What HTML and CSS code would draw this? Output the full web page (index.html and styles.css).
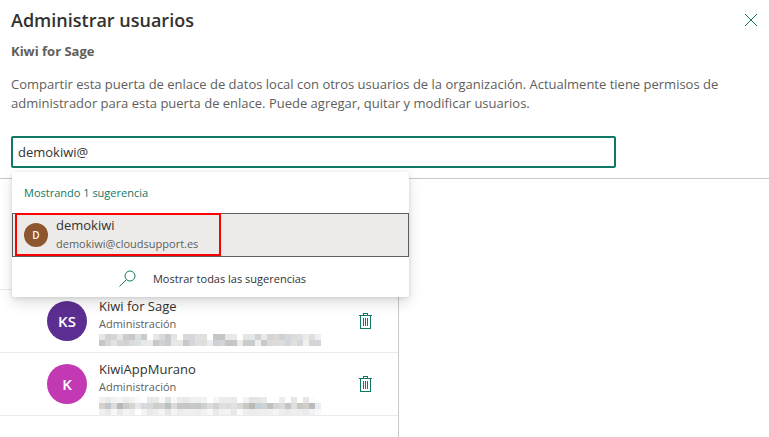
FILE: index.html
```html
<!DOCTYPE html>
<html lang="es">

<head>
    <meta charset="UTF-8">
    <meta name="viewport" content="width=device-width, initial-scale=1.0">
    <title>Administrar usuarios</title>

    <link rel="stylesheet" href="styles.css">
</head>

<body>

    <header class="panel-header">
        <div class="title-row">
            <h1>Administrar usuarios</h1>
            <button type="button" class="icon-btn" aria-label="Cerrar">
                <svg width="12" height="12" viewBox="0 0 12 12"><path d="M0 0L12 12M12 0L0 12" /></svg>
            </button>
        </div>
        <h2>Kiwi for Sage</h2>
        <p class="description">Compartir esta puerta de enlace de datos local con otros usuarios de la organización. Actualmente tiene permisos de administrador para esta puerta de enlace. Puede agregar, quitar y modificar usuarios.</p>

        <div class="picker">
            <input type="text" class="picker-input" id="people" aria-label="Buscar usuarios" value="demokiwi@">

            <div class="suggestions">
                <p class="suggestions-title">Mostrando 1 sugerencia</p>
                <button type="button" class="suggestion">
                    <span class="avatar avatar-small">D</span>
                    <span class="suggestion-text">
                        <span class="name">demokiwi</span>
                        <span class="mail">demokiwi@cloudsupport.es</span>
                    </span>
                    <span class="highlight"></span>
                </button>
                <button type="button" class="show-all">
                    <svg width="17" height="17" viewBox="0 0 17 17"><circle cx="11" cy="6" r="5" /><path d="M7.4 9.6L.5 16.5" /></svg>
                    <span>Mostrar todas las sugerencias</span>
                </button>
            </div>
        </div>
    </header>

    <main class="user-list">
        <div class="list-heading"></div>
        <div class="user user-empty"></div>
        <div class="user">
            <span class="avatar purple">KS</span>
            <div class="user-info">
                <p class="name">Kiwi for Sage</p>
                <p class="role">Administración</p>
                <svg class="mosaic" id="mosaic-sage" width="222" height="12"></svg>
            </div>
            <button type="button" class="icon-btn" aria-label="Quitar Kiwi for Sage">
                <svg width="13" height="16" viewBox="0 0 13 16" shape-rendering="crispEdges"><path d="M0 2.5H13M4.5 2V.5H8.5V2M1.5 3V15.5H11.5V3M4.5 5V13M6.5 5V13M8.5 5V13" /></svg>
            </button>
        </div>
        <div class="user">
            <span class="avatar pink">K</span>
            <div class="user-info">
                <p class="name">KiwiAppMurano</p>
                <p class="role">Administración</p>
                <svg class="mosaic" id="mosaic-murano" width="222" height="18"></svg>
            </div>
            <button type="button" class="icon-btn" aria-label="Quitar KiwiAppMurano">
                <svg width="13" height="16" viewBox="0 0 13 16" shape-rendering="crispEdges"><path d="M0 2.5H13M4.5 2V.5H8.5V2M1.5 3V15.5H11.5V3M4.5 5V13M6.5 5V13M8.5 5V13" /></svg>
            </button>
        </div>
    </main>

    <script src="script.js"></script>

</body>

</html>
```
FILE: styles.css
```css
* {
    margin: 0;
    padding: 0;
    box-sizing: border-box;
}

body {
    background-color: #fff;
    color: #323130;
    font-family: "Segoe UI", "Open Sans", sans-serif;
    font-size: 13px;
    line-height: 20px;
    display: flex;
    flex-direction: column;
    min-height: 100vh;
}

button {
    border: none;
    background: none;
    color: inherit;
    font: inherit;
    text-align: left;
    cursor: pointer;
}

svg {
    display: block;
    fill: none;
    stroke: #117865;
    stroke-width: 1;
}

.panel-header {
    padding: 6px 12px 10px 11px;
    border-bottom: 1px solid #c8c8c8;
}

.title-row {
    display: flex;
    justify-content: space-between;
    align-items: center;
}

h1 {
    font-size: 18px;
    line-height: 28px;
    font-weight: 600;
}

h2 {
    margin-top: 7px;
    font-size: 13px;
    line-height: 20px;
    font-weight: 700;
    color: #605e5c;
}

.description {
    max-width: 730px;
    margin: 14px 0 23px;
    line-height: 19px;
    color: #605e5c;
}

.picker {
    position: relative;
}

.picker-input {
    display: block;
    width: 100%;
    max-width: 605px;
    height: 32px;
    padding: 0 5px;
    border: 2px solid #117865;
    border-radius: 2px;
    outline: none;
    color: #323130;
    font: inherit;
}

.suggestions {
    position: absolute;
    top: 100%;
    left: 0;
    width: 397px;
    margin: 4px 0 0 1px;
    border-radius: 2px;
    background-color: #fff;
    box-shadow: 0 6px 14px rgba(0, 0, 0, 0.13), 0 1px 4px rgba(0, 0, 0, 0.11);
}

.suggestions-title {
    padding: 0 12px;
    font-size: 11px;
    line-height: 41px;
    color: #117865;
}

.suggestion {
    position: relative;
    display: flex;
    align-items: center;
    gap: 8px;
    width: 100%;
    height: 44px;
    padding: 0 11px;
    border: 1px solid #605e5c;
    background-color: #edebe9;
}

.suggestion-text {
    display: flex;
    flex-direction: column;
    padding-bottom: 3px;
}

.mail {
    font-size: 11px;
    line-height: 17px;
    color: #605e5c;
}

.highlight {
    position: absolute;
    top: -1px;
    left: 2px;
    width: 206px;
    height: 43px;
    border: 2px solid #f00;
}

.show-all {
    display: flex;
    justify-content: center;
    align-items: center;
    gap: 17px;
    width: 100%;
    height: 40px;
    padding: 3px 0 0 4px;
    font-size: 11px;
}

.user-list {
    flex: 1;
    width: 399px;
    border-right: 1px solid #c8c8c8;
}

.list-heading {
    height: 48px;
}

.user {
    display: flex;
    align-items: flex-start;
    gap: 12px;
    height: 63px;
    padding: 11px 26px 0 47px;
    border-bottom: 1px solid #edebe9;
}

.user .icon-btn {
    margin-top: 12px;
}

.user-info {
    flex: 1;
    margin-top: -5px;
}

.role {
    font-size: 11px;
    line-height: 15px;
    color: #605e5c;
}

.mosaic {
    margin-top: 3px;
    stroke: none;
}

.avatar {
    display: flex;
    justify-content: center;
    align-items: center;
    width: 40px;
    height: 40px;
    border-radius: 50%;
    color: #fff;
    font-size: 15px;
    font-weight: 600;
}

.avatar-small {
    width: 24px;
    height: 24px;
    background-color: #8e562e;
    font-size: 10px;
}

.purple {
    background-color: #5c2e91;
}

.pink {
    background-color: #c239b3;
}
```
FILE: script.js
```js
const CELL = 6;

// Cada texto es una fila de celdas, un color por celda
const mosaics = {
    'mosaic-sage': [
        'e6e6e6 d2d3d0 d6d5d3 e6e6e6 cacccd c8c6c6 dcdfe1 c9cccd ffffff e6e8e8 d8dadb c8cacb e3e5e5 fefefe d5d9da d6d8dc dde1e0 e0e0e0 ffffff c6c8c7 c4c6c6 e8e8e8 eaeaea ffffff e4e6e6 e6e8e8 d2d3d3 e8e8e8 d4d4d4 dad8d2 cfd1d4 d4d9df dcdcda dcdfe1 ecebe8 dfe0e2 efeff0',
        'c5c6c6 d5d5d5 e2e3e3 d6d5d4 d2d2d1 d8dcdf d9e0e2 e6e8e9 ece9e6 c4c8c8 d0d2d2 c6ccd0 e8e8e8 ebe7e3 c6c8ca d6d6da dfdfdf e0dedc ebebeb ccd0d6 d4d4d6 c4c6c6 c5c7c7 efebe6 c8cccd c8ccce ecefef c8c9ca dcdad8 dedcd8 dddddd d2d6da e0e0e0 d5d7d8 f0f2f2 d4d4d6 d2d6d8'
    ],
    'mosaic-murano': [
        'f0f0f0 eaeaea f2f2f2 f5f5f5 ededed f2f2f2 fafafa ffffff e6e8e8 e8e8e8 fafafa e1e2e3 f8f8f8 ebeceb e8e8e8 f0f0f0 f0f0f0 f2f2f2 ffffff f6f6f5 ececec ececec e9eaeb ffffff f2f2f2 e3e5e5 e4e5e7 e9e9e9 ffffff ffffff ebeded ffffff e6e6e6 ffffff e6e5e3 fcfcfc ffffff',
        'd6d2cb c2c7cf dcdcde b8b8ba cbcbcb d8d4d0 e8e8e8 d4dade d8d8d8 ccceca d0d0d0 bcc1c2 dedcda c4c8cc c8c6c4 c8c8c6 c4c6c8 ccd0d0 dcdcdc d0d2d4 dddee0 dedcd8 e0e2e2 d8dada cac8c2 babab4 c4d0da d0d2d2 c0c2c1 d4d4d4 dddbd8 c4c4c4 dce0e0 c8c8c0 d0cec8 babbbb e4ecf4',
        'f0f0f0 e8e8e8 f8f8f8 eaeaea f4f4f4 f0f0f0 ffffff f4f4f4 e9e9e9 eeeeee f5f5f5 e6e6e6 f4f4f4 ececec efefef f0f0f0 ededed f2f2f2 f8f8f8 e8eaea f2f4f4 f4f4f2 e7e9e9 fafafa eeeeee ececec ededee eeeeee f0f0f0 f4f4f4 eeeeee eaeaea eeeeee ededed eaeaea f0f4f8 f8f8f8'
    ]
};

function drawMosaic(id, rows) {
    const svg = document.getElementById(id);

    rows.forEach((row, y) => {
        row.split(' ').forEach((color, x) => {
            const rect = document.createElementNS('http://www.w3.org/2000/svg', 'rect');
            rect.setAttribute('x', x * CELL);
            rect.setAttribute('y', y * CELL);
            rect.setAttribute('width', CELL);
            rect.setAttribute('height', CELL);
            rect.setAttribute('fill', '#' + color);
            svg.appendChild(rect);
        });
    });
}

for (const id in mosaics) {
    drawMosaic(id, mosaics[id]);
}
```
